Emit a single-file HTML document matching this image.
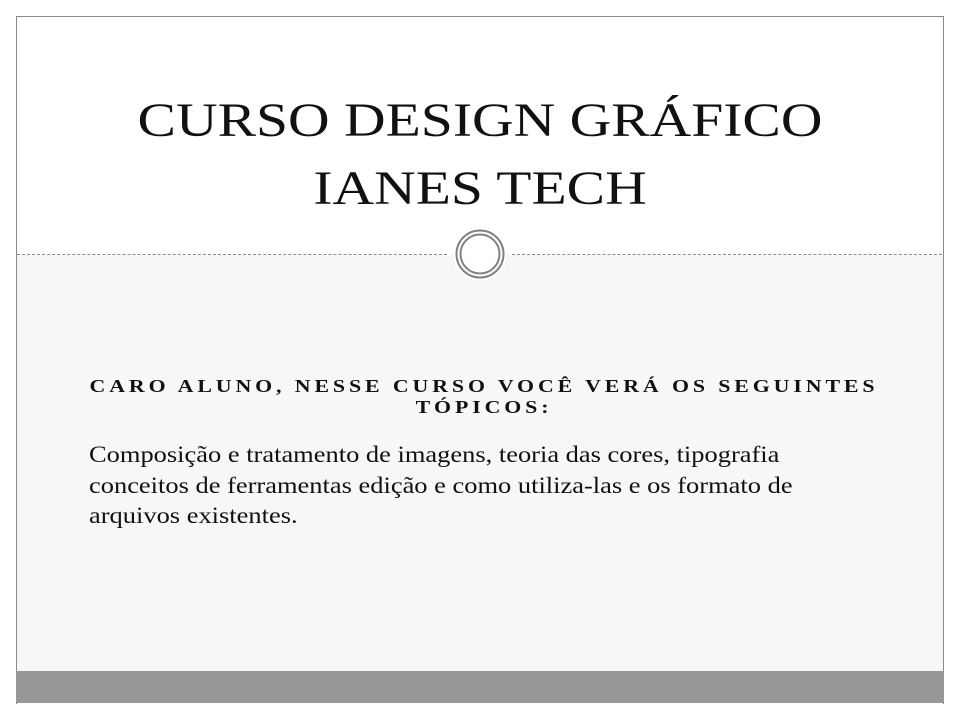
<!DOCTYPE html>
<html><head><meta charset="utf-8"><style>
html,body{margin:0;padding:0;background:#fff;width:960px;height:720px;overflow:hidden;font-family:"Liberation Serif",serif;}
.frame{position:absolute;left:16px;top:16px;width:926px;height:687px;border:1px solid #8a8a8a;border-bottom:none;background:#fff;}
.lower{position:absolute;left:17px;top:255px;width:926px;height:416px;background:#f7f7f7;}
.dash{position:absolute;top:254px;height:0;border-top:1px dashed #8a8a8a;}
.bar{position:absolute;left:16px;top:671px;width:928px;height:32px;background:#989898;}
.circ{position:absolute;left:453px;top:227px;width:54px;height:54px;border-radius:50%;background:#fff;}
.t{position:absolute;left:0;width:960px;text-align:center;font-size:48px;color:#111;line-height:64px;transform:scaleX(1.2);transform-origin:480px 0;}
.s{position:absolute;left:0;width:960px;text-align:center;font-weight:bold;font-size:18px;letter-spacing:3.2px;line-height:20px;color:#111;transform:scaleX(1.215);}
.body{position:absolute;left:89px;top:440px;width:700px;font-size:23px;line-height:30.5px;color:#111;transform:scaleX(1.15);transform-origin:0 0;white-space:nowrap;}
</style></head><body>
<div class="frame"></div>
<div class="lower"></div>
<div class="dash" style="left:17px;width:430px"></div>
<div class="dash" style="left:512px;width:430px"></div>
<div class="circ"></div>
<svg style="position:absolute;left:450px;top:224px" width="60" height="60"><circle cx="30" cy="30" r="23.5" fill="#fff" stroke="#808080" stroke-width="2"/><circle cx="30" cy="30" r="19.5" fill="#fff" stroke="#808080" stroke-width="2"/></svg>
<div class="bar"></div>
<div class="t" style="top:89px">CURSO DESIGN GRÁFICO</div>
<div class="t" style="top:157px">IANES TECH</div>
<div class="s" style="top:376px;left:4px">CARO ALUNO, NESSE CURSO VOCÊ VERÁ OS SEGUINTES</div>
<div class="s" style="top:397px;left:4px">TÓPICOS:</div>
<div class="body">Composição e tratamento de imagens, teoria das cores, tipografia<br>conceitos de ferramentas edição e como utiliza-las e os formato de<br>arquivos existentes.</div>
</body></html>
